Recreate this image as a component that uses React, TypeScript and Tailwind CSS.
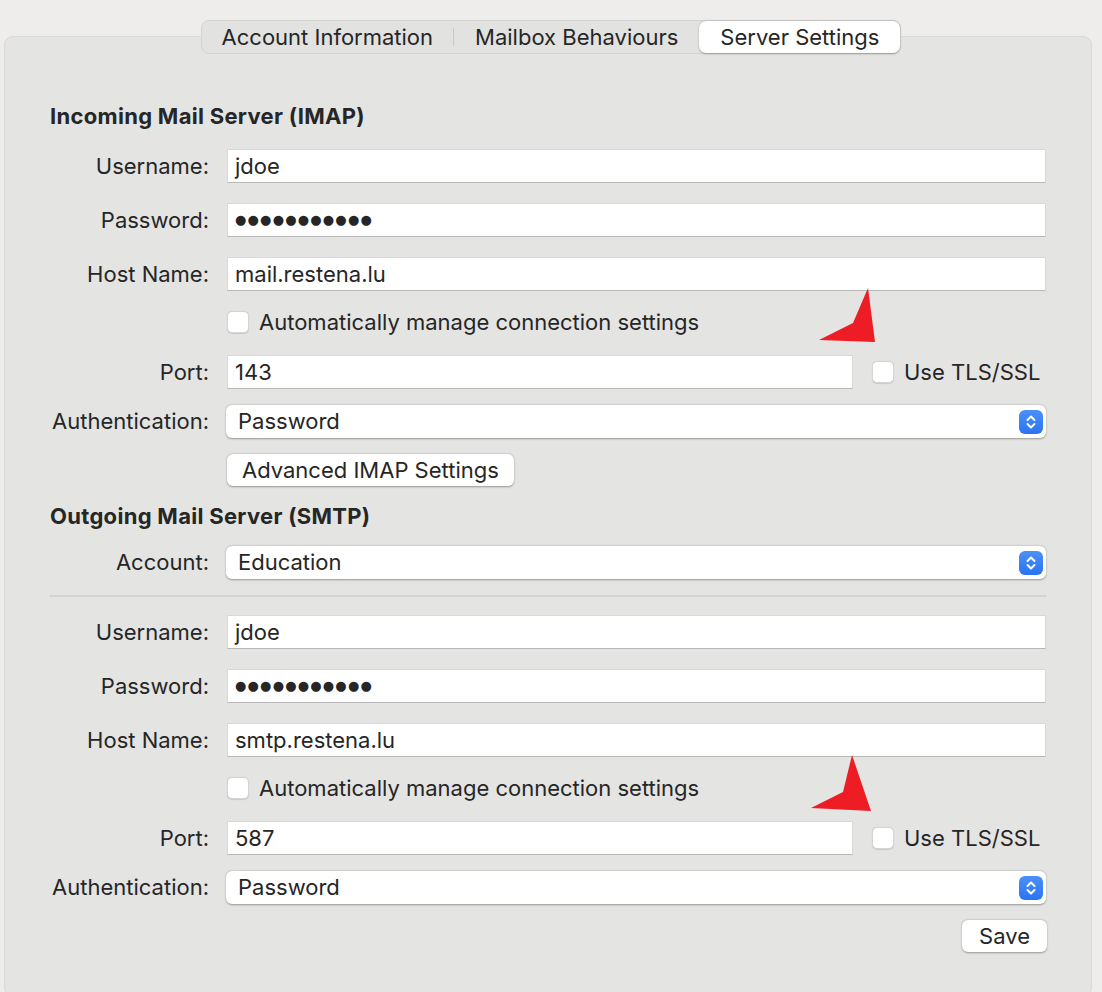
import React from "react";

const font = { fontFamily: "Inter, 'Noto Sans', 'DejaVu Sans', sans-serif" };

function Label({ children }: { children: React.ReactNode }) {
  return <div className="w-[159px] shrink-0 text-right text-[22px] text-[#262626]">{children}</div>;
}

function TextField({ value, secret, className = "" }: { value: string; secret?: boolean; className?: string }) {
  return (
    <div
      className={`h-[34px] bg-white border border-[#d9d9d9] border-b-[#b8b8b8] flex items-center pl-[7px] text-[22px] text-[#262626] ${className}`}
    >
      {secret ? (
        <span className="text-[13px] tracking-[1.2px] text-[#262626]" style={{ fontFamily: "'DejaVu Sans', sans-serif" }}>
          {value}
        </span>
      ) : (
        value
      )}
    </div>
  );
}

function Row({ label, children, className = "" }: { label: string; children: React.ReactNode; className?: string }) {
  return (
    <div className={`flex items-center gap-[18px] ${className}`}>
      <Label>{label}</Label>
      <div className="flex-1 flex items-center">{children}</div>
    </div>
  );
}

function Checkbox() {
  return <div className="w-[22px] h-[22px] rounded-[5px] bg-white border border-[#d4d4d4] shadow-[0_0.5px_1px_rgba(0,0,0,0.12)] shrink-0" />;
}

function Stepper() {
  return (
    <div className="w-[24px] h-[24px] rounded-[6px] bg-gradient-to-b from-[#4b8ff8] to-[#2a74f3] flex items-center justify-center">
      <svg width="12" height="16" viewBox="0 0 12 16" fill="none" stroke="white" strokeWidth="2" strokeLinecap="round" strokeLinejoin="round">
        <path d="M2.5 6 L6 2.5 L9.5 6" />
        <path d="M2.5 10 L6 13.5 L9.5 10" />
      </svg>
    </div>
  );
}

function Select({ value }: { value: string }) {
  return (
    <div className="flex-1 h-[33px] -ml-px bg-white rounded-[6px] shadow-[0_0.5px_2px_rgba(0,0,0,0.35)] flex items-center justify-between pl-[12px] pr-[3px] text-[22px] text-[#262626]">
      <span>{value}</span>
      <Stepper />
    </div>
  );
}

function PushButton({ children, className = "" }: { children: React.ReactNode; className?: string }) {
  return (
    <div
      className={`h-[32px] bg-white rounded-[6px] shadow-[0_0.5px_2px_rgba(0,0,0,0.35)] flex items-center px-[15px] text-[22px] text-[#262626] ${className}`}
    >
      {children}
    </div>
  );
}

function CheckRow({ text }: { text: string }) {
  return (
    <div className="flex items-center h-[22px] mt-[20px] pl-[177px] gap-[10px] text-[22px] text-[#262626]">
      <Checkbox />
      <span>{text}</span>
    </div>
  );
}

function PortRow({ port }: { port: string }) {
  return (
    <Row label="Port:" className="mt-[22px]">
      <TextField value={port} className="w-[626px]" />
      <div className="ml-[19px] flex items-center gap-[10px] text-[22px] text-[#262626]">
        <Checkbox />
        <span>Use TLS/SSL</span>
      </div>
    </Row>
  );
}

function Arrow({ points, className }: { points: string; className: string }) {
  return (
    <svg className={`absolute ${className}`} width="70" height="60" viewBox="0 0 70 60">
      <polygon points={points} fill="#ee1c25" />
    </svg>
  );
}

export default function App() {
  const dots = "●●●●●●●●●●●";
  return (
    <div className="w-[1102px] h-[992px] bg-[#eeedeb] overflow-hidden relative" style={font}>
      <div className="pt-[20px] flex justify-center relative z-10">
        <div className="flex items-center h-[34px] bg-[#e2e2e1] border border-[#d4d4d3] rounded-[8px] text-[22px] text-[#262626]">
          <div className="px-[20px]">Account Information</div>
          <div className="w-px h-[18px] bg-[#c9c9c8]" />
          <div className="px-[21px]">Mailbox Behaviours</div>
          <div className="h-[32px] bg-white rounded-[7px] shadow-[0_0.5px_2px_rgba(0,0,0,0.3)] px-[21px] flex items-center">
            Server Settings
          </div>
        </div>
      </div>

      <div className="ml-[4px] w-[1088px] -mt-[18px] h-[960px] bg-[#e4e4e3] border border-[#dadad9] rounded-[9px] pt-[65px] pl-[45px] pr-[45px]">
        <div className="h-[28px] flex items-center text-[22px] tracking-[0.3px] font-bold text-[#262626]">Incoming Mail Server (IMAP)</div>

        <Row label="Username:" className="mt-[19px]">
          <TextField value="jdoe" className="flex-1" />
        </Row>
        <Row label="Password:" className="mt-[20px]">
          <TextField value={dots} secret className="flex-1" />
        </Row>
        <Row label="Host Name:" className="mt-[20px]">
          <TextField value="mail.restena.lu" className="flex-1" />
        </Row>
        <CheckRow text="Automatically manage connection settings" />
        <PortRow port="143" />
        <Row label="Authentication:" className="mt-[16px]">
          <Select value="Password" />
        </Row>
        <div className="mt-[16px] pl-[177px] flex">
          <PushButton>Advanced IMAP Settings</PushButton>
        </div>

        <div className="mt-[16px] h-[28px] flex items-center text-[22px] tracking-[0.3px] font-bold text-[#262626]">Outgoing Mail Server (SMTP)</div>
        <Row label="Account:" className="mt-[16px]">
          <Select value="Education" />
        </Row>
        <div className="mt-[16px] h-[2px] bg-[#d3d3d2]" />

        <Row label="Username:" className="mt-[18px]">
          <TextField value="jdoe" className="flex-1" />
        </Row>
        <Row label="Password:" className="mt-[20px]">
          <TextField value={dots} secret className="flex-1" />
        </Row>
        <Row label="Host Name:" className="mt-[20px]">
          <TextField value="smtp.restena.lu" className="flex-1" />
        </Row>
        <CheckRow text="Automatically manage connection settings" />
        <PortRow port="587" />
        <Row label="Authentication:" className="mt-[16px]">
          <Select value="Password" />
        </Row>
        <div className="mt-[16px] flex justify-end -mr-[1px]">
          <PushButton className="px-[17px]">Save</PushButton>
        </div>
      </div>

      {/* red pointer marks */}
      <Arrow className="left-[810px] top-[285px]" points="58,3 65,57 9,55 43,38" />
      <Arrow className="left-[805px] top-[752px]" points="47,3 66,59 6,56 38,40" />
    </div>
  );
}
